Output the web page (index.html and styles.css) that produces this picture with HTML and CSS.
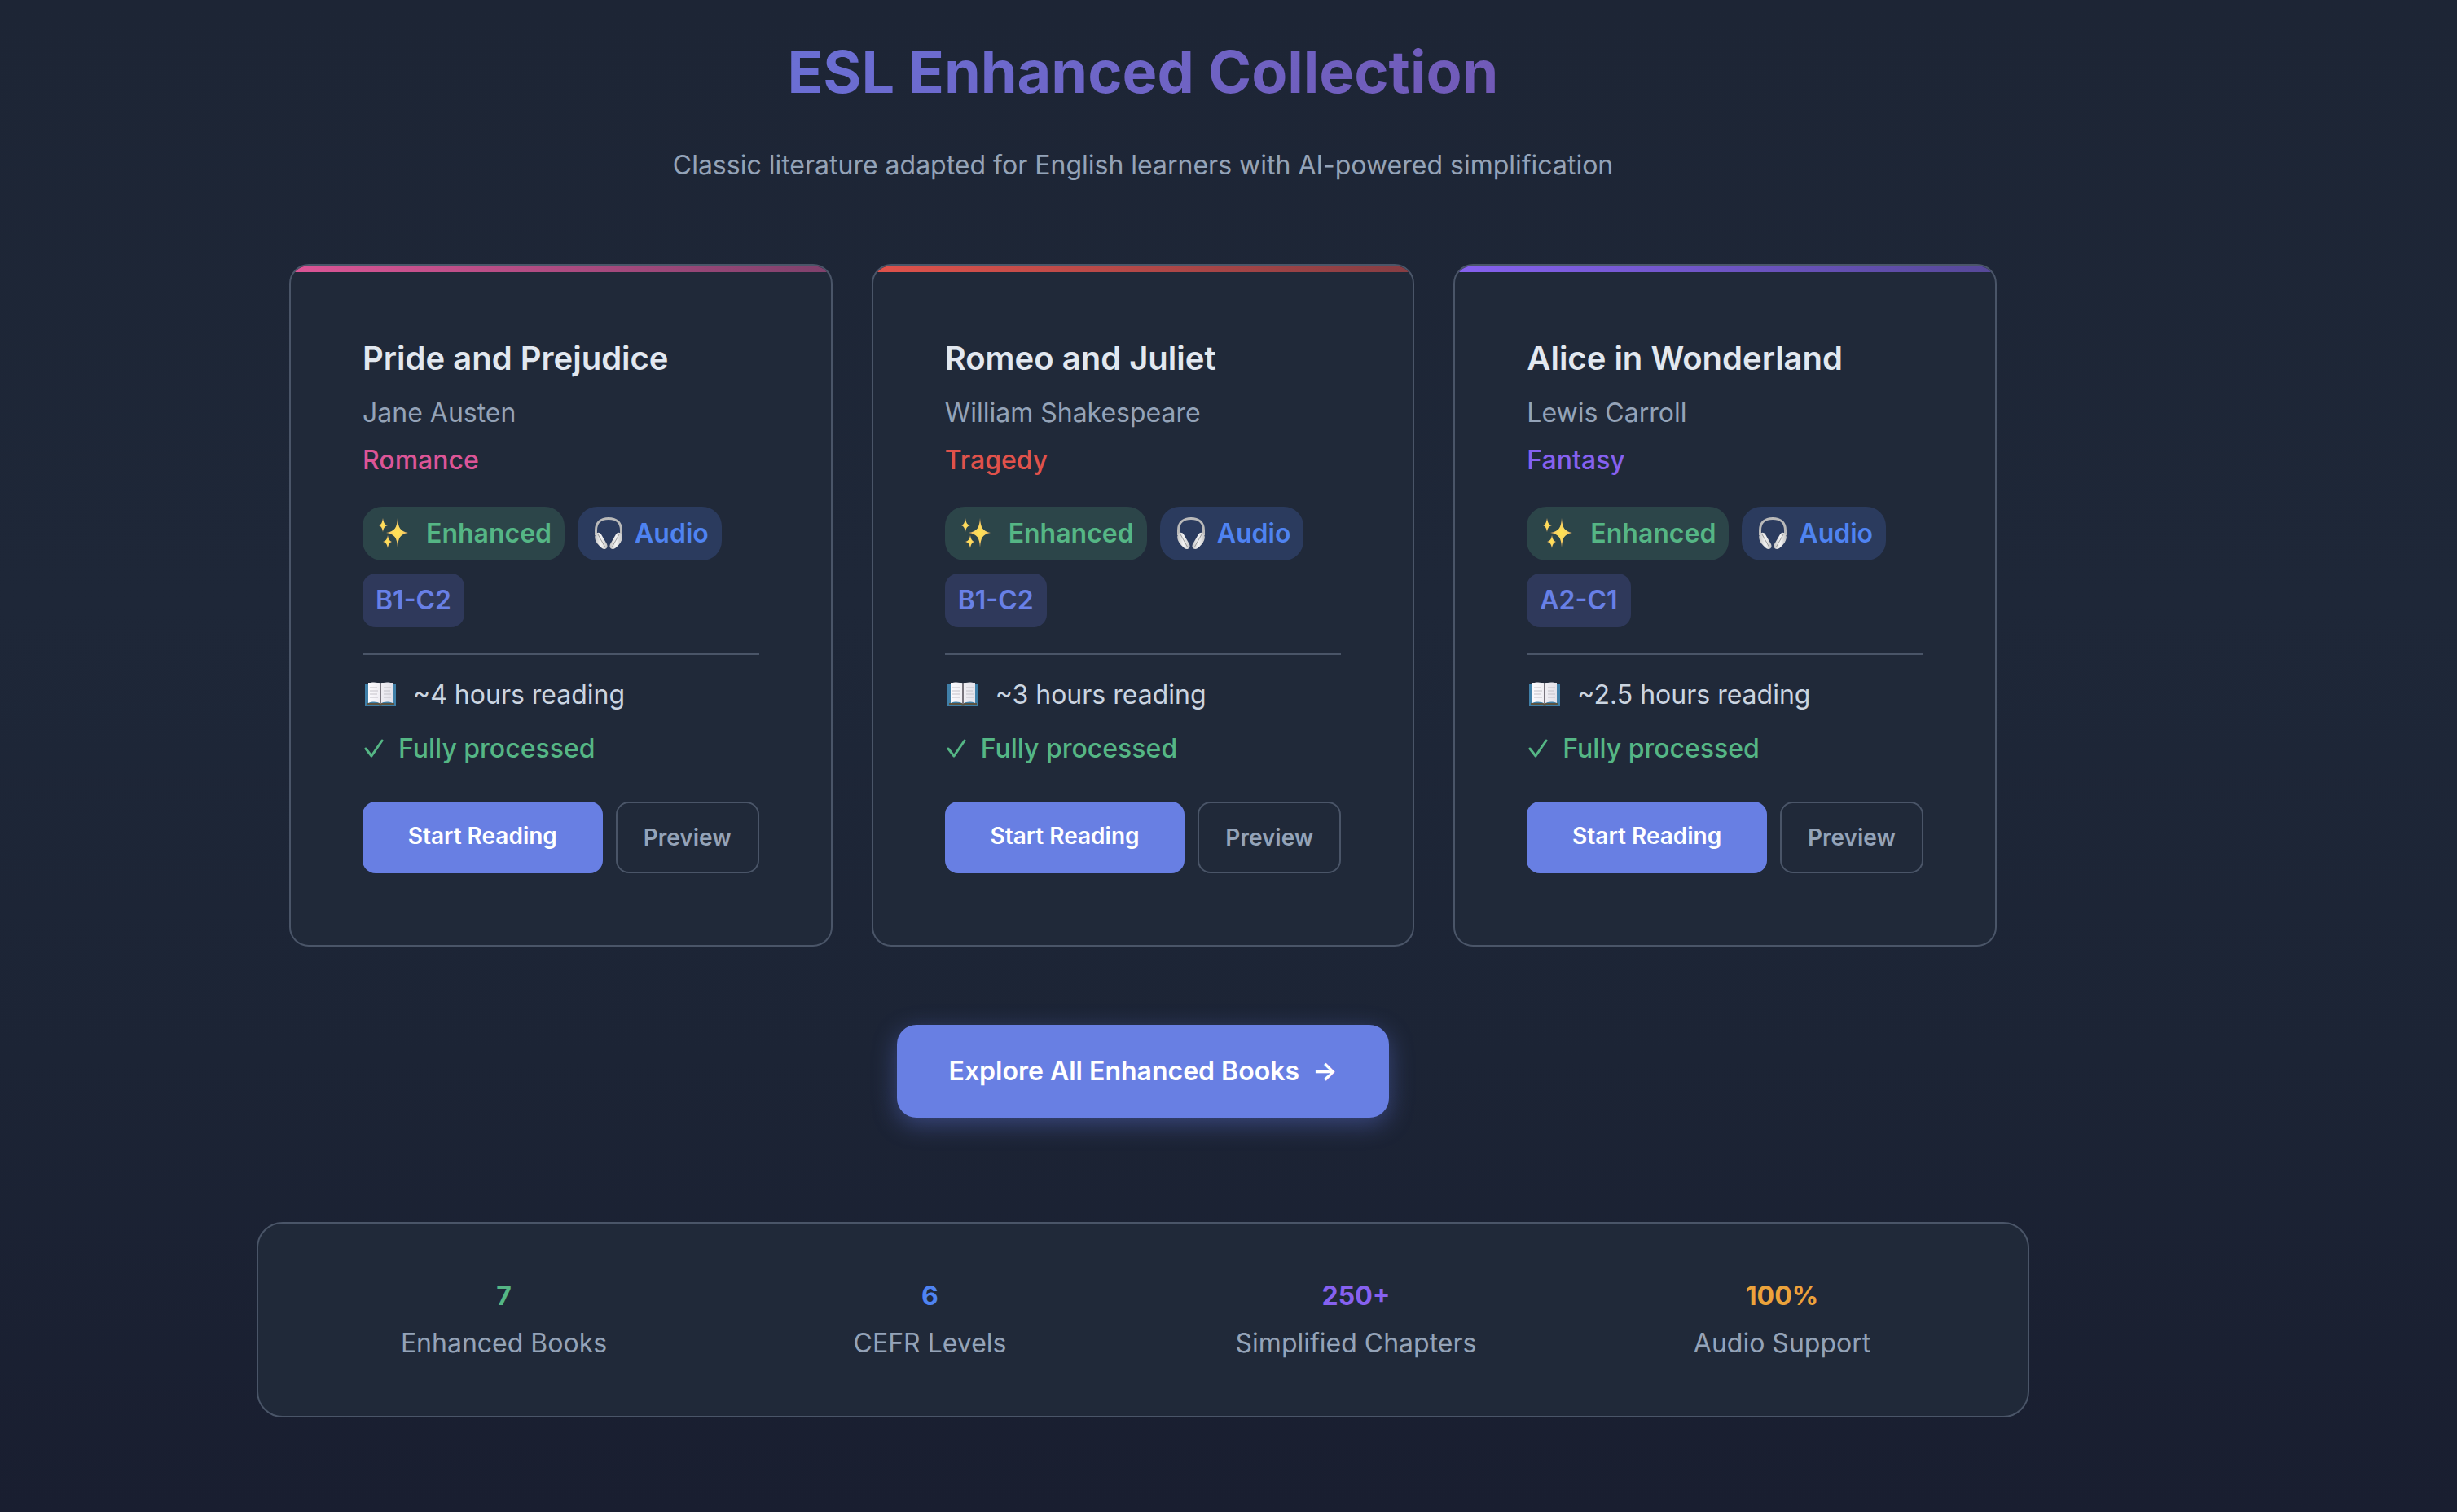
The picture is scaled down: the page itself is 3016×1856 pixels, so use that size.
FILE: index.html
```html
<!DOCTYPE html>
<html lang="en">
<head>
<meta charset="utf-8">
<title>ESL Enhanced Collection</title>
<link rel="stylesheet" href="styles.css">
</head>
<body>
<svg class="sprite" aria-hidden="true">
  <defs>
    <radialGradient id="gold"><stop offset="0" stop-color="#ffe352"/><stop offset=".5" stop-color="#fbd560"/><stop offset="1" stop-color="#e8a868"/></radialGradient>
    <linearGradient id="steel" x1="0" x2="1"><stop offset="0" stop-color="#c4c4c4"/><stop offset=".5" stop-color="#f4f4f4"/><stop offset="1" stop-color="#c4c4c4"/></linearGradient>
    <linearGradient id="page" x1="0" x2="1"><stop offset="0" stop-color="#fbfafd"/><stop offset="1" stop-color="#e4e2ea"/></linearGradient>
  </defs>
  <symbol id="sparkles" viewBox="0 0 40 40">
    <g fill="url(#gold)">
      <path d="M27 1C28 13 30 17 40 19C30 21 28 25 27 37C26 25 24 21 13 19C24 17 26 13 27 1Z"/>
      <path d="M9 1C10 7 11 9 15 10C11 11 10 13 9 18C8 13 7 11 4 10C7 9 8 7 9 1Z"/>
      <path d="M15 22C16 27 17 29 20 30C17 31 16 33 15 38C14 33 13 31 9 30C13 29 14 27 15 22Z"/>
    </g>
  </symbol>
  <symbol id="headphones" viewBox="0 0 40 44">
    <path d="M6.5 24V18C6.5 8 13 3.500 22 3.500S37.500 8 37.500 18V24" fill="none" stroke="#b9b9b9" stroke-width="3"/>
    <g fill="url(#steel)">
      <path d="M6 23C8 20 11 20 13 23L20 35C22 39 18 43 14 40C9 36 3 29 6 23Z"/>
      <path d="M38 23C36 20 33 20 31 23L24 35C22 39 26 43 30 40C35 36 41 29 38 23Z"/>
    </g>
    <path d="M9 23L18 39M35 23L26 39" stroke="#999" stroke-width="1"/>
  </symbol>
  <symbol id="book" viewBox="0 0 40 32">
    <path d="M1 3H39V30H1Z" fill="#3f7fa8"/>
    <path d="M3 26H37V28H23C22 30 18 30 17 28H3Z" fill="#5c5340"/>
    <path d="M5 2C10 0 16 0 20 3C24 0 30 0 35 2V26C30 24 24 24 20 27C16 24 10 24 5 26Z" fill="url(#page)"/>
    <path d="M20 3V27" stroke="#77737c" stroke-width="2"/>
    <path d="M7 7H16M7 11H17M7 15H16M7 19H17M24 7H33M24 11H32M24 15H33M24 19H33" stroke="#c4c2c9" stroke-width="1"/>
  </symbol>
  <symbol id="check" viewBox="0 0 24 24">
    <path d="M2 12L9 21L22 2" fill="none" stroke="currentColor" stroke-width="3" stroke-linecap="round" stroke-linejoin="round"/>
  </symbol>
</svg>

<main class="page">
  <header class="intro">
    <h1 class="intro-title">ESL Enhanced Collection</h1>
    <p class="intro-text">Classic literature adapted for English learners with AI-powered simplification</p>
  </header>

  <section class="books">
    <article class="book romance">
      <h2 class="book-title">Pride and Prejudice</h2>
      <p class="author">Jane Austen</p>
      <p class="genre">Romance</p>
      <div class="badges">
        <span class="badge enhanced"><svg class="icon"><use href="#sparkles"/></svg>Enhanced</span>
        <span class="badge audio"><svg class="icon tall"><use href="#headphones"/></svg>Audio</span>
        <span class="badge level">B1-C2</span>
      </div>
      <div class="meta">
        <p class="time"><svg class="icon-book"><use href="#book"/></svg>~4 hours reading</p>
        <p class="status"><svg class="icon-check"><use href="#check"/></svg>Fully processed</p>
      </div>
      <div class="actions"><a class="start" href="#pride">Start Reading</a><button class="preview" type="button">Preview</button></div>
    </article>

    <article class="book tragedy">
      <h2 class="book-title">Romeo and Juliet</h2>
      <p class="author">William Shakespeare</p>
      <p class="genre">Tragedy</p>
      <div class="badges">
        <span class="badge enhanced"><svg class="icon"><use href="#sparkles"/></svg>Enhanced</span>
        <span class="badge audio"><svg class="icon tall"><use href="#headphones"/></svg>Audio</span>
        <span class="badge level">B1-C2</span>
      </div>
      <div class="meta">
        <p class="time"><svg class="icon-book"><use href="#book"/></svg>~3 hours reading</p>
        <p class="status"><svg class="icon-check"><use href="#check"/></svg>Fully processed</p>
      </div>
      <div class="actions"><a class="start" href="#romeo">Start Reading</a><button class="preview" type="button">Preview</button></div>
    </article>

    <article class="book fantasy">
      <h2 class="book-title">Alice in Wonderland</h2>
      <p class="author">Lewis Carroll</p>
      <p class="genre">Fantasy</p>
      <div class="badges">
        <span class="badge enhanced"><svg class="icon"><use href="#sparkles"/></svg>Enhanced</span>
        <span class="badge audio"><svg class="icon tall"><use href="#headphones"/></svg>Audio</span>
        <span class="badge level">A2-C1</span>
      </div>
      <div class="meta">
        <p class="time"><svg class="icon-book"><use href="#book"/></svg>~2.5 hours reading</p>
        <p class="status"><svg class="icon-check"><use href="#check"/></svg>Fully processed</p>
      </div>
      <div class="actions"><a class="start" href="#alice">Start Reading</a><button class="preview" type="button">Preview</button></div>
    </article>
  </section>

  <a class="explore" href="#all">Explore All Enhanced Books <span>→</span></a>

  <section class="stats">
    <div class="stat"><strong class="green">7</strong><span>Enhanced Books</span></div>
    <div class="stat"><strong class="blue">6</strong><span>CEFR Levels</span></div>
    <div class="stat"><strong class="violet">250+</strong><span>Simplified Chapters</span></div>
    <div class="stat"><strong class="amber">100%</strong><span>Audio Support</span></div>
  </section>
</main>
</body>
</html>
```
FILE: styles.css
```css
:root {
  --line: #4a5568;
  --panel: #202939;
  --muted: #94a3b8;
  --primary: #6880e6;
  --green: #55b685;
  --blue: #4f83f1;
  --violet: #8661f0;
}

* { box-sizing: border-box; }

body {
  margin: 0;
  min-height: 100vh;
  padding: 40px 210px 114px 0;
  background: linear-gradient(180deg, #1d2535 0%, #1e2738 40%, #1c2435 70%, #191e30 100%);
  color: var(--muted);
  font: 400 32px/50px Inter, "Liberation Sans", sans-serif;
}

h1, h2, p { margin: 0; }

.sprite {
  display: block;
  width: 0;
  height: 0;
}

.page {
  display: flex;
  flex-direction: column;
  max-width: 2176px;
  margin: 0 auto;
}

.intro {
  padding: 0 40px;
  text-align: center;
}

.intro-title {
  margin-bottom: 42px;
  background: linear-gradient(135deg, #667eea 0%, #764ba2 100%);
  -webkit-background-clip: text;
  background-clip: text;
  color: transparent;
  font-size: 72px;
  font-weight: 700;
  line-height: 96px;
}

.books {
  display: grid;
  grid-template-columns: repeat(3, 1fr);
  gap: 48px;
  margin-top: 96px;
  padding: 0 40px;
}

.book {
  position: relative;
  overflow: hidden;
  padding: 88px;
  border: 2px solid var(--line);
  border-radius: 24px;
  background: var(--panel);
}

.book::before {
  content: "";
  position: absolute;
  inset: 0 0 auto;
  height: 8px;
  background: linear-gradient(90deg, var(--accent), var(--accent-end));
}

.romance { --accent: #dc5596; --accent-end: #7f416c; }
.tragedy { --accent: #e0524b; --accent-end: #863d43; }
.fantasy { --accent: #8661f0; --accent-end: #564898; }

.book-title {
  margin-bottom: 16px;
  color: #e2e8f0;
  font-size: 40px;
  font-weight: 600;
  line-height: 52px;
}

.genre {
  margin-top: 8px;
  color: var(--accent);
  font-weight: 500;
}

.badges {
  display: flex;
  flex-wrap: wrap;
  gap: 16px;
  margin: 32px 0;
}

.badge {
  display: flex;
  align-items: center;
  padding: 8px 16px;
  border-radius: 24px;
  font-weight: 600;
}

.enhanced { gap: 22px; background: #2c4549; color: var(--green); }
.audio { gap: 14px; background: #2b3b5e; color: var(--blue); }
.level { border-radius: 16px; background: #2f395b; color: var(--primary); }

.icon { width: 40px; height: 40px; }
.icon.tall { height: 44px; }
.icon-book { width: 40px; height: 32px; }
.icon-check { width: 24px; height: 24px; }

.meta {
  display: grid;
  gap: 16px;
  padding-top: 24px;
  border-top: 2px solid var(--line);
}

.time, .status {
  display: flex;
  align-items: center;
}

.time { gap: 20px; padding-left: 2px; color: #cbd5e1; }
.status { gap: 18px; padding-left: 2px; color: var(--green); font-weight: 500; }

.actions {
  display: flex;
  gap: 16px;
  margin-top: 40px;
}

.start, .preview {
  padding: 20px 32px;
  border-radius: 16px;
  font: 600 28px/44px Inter, "Liberation Sans", sans-serif;
}

.start {
  flex: 1;
  background: #687fe3;
  color: #fff;
  text-align: center;
  text-decoration: none;
}

.preview {
  border: 2px solid var(--line);
  background: transparent;
  color: var(--muted);
}

.explore {
  display: flex;
  align-self: center;
  gap: 16px;
  margin: 96px 0 128px;
  padding: 32px 64px;
  border-radius: 24px;
  background: #687fe3;
  box-shadow: 0 8px 30px rgba(102, 126, 234, .4);
  color: #fff;
  font-weight: 600;
  text-decoration: none;
}

.stats {
  display: grid;
  grid-template-columns: repeat(4, 1fr);
  gap: 48px;
  padding: 64px;
  border: 2px solid var(--line);
  border-radius: 32px;
  background: var(--panel);
}

.stat {
  display: grid;
  gap: 8px;
  text-align: center;
}

.stat strong { font-weight: 700; }
.green { color: var(--green); }
.blue { color: var(--blue); }
.violet { color: var(--violet); }
.amber { color: #eca33b; }
```
